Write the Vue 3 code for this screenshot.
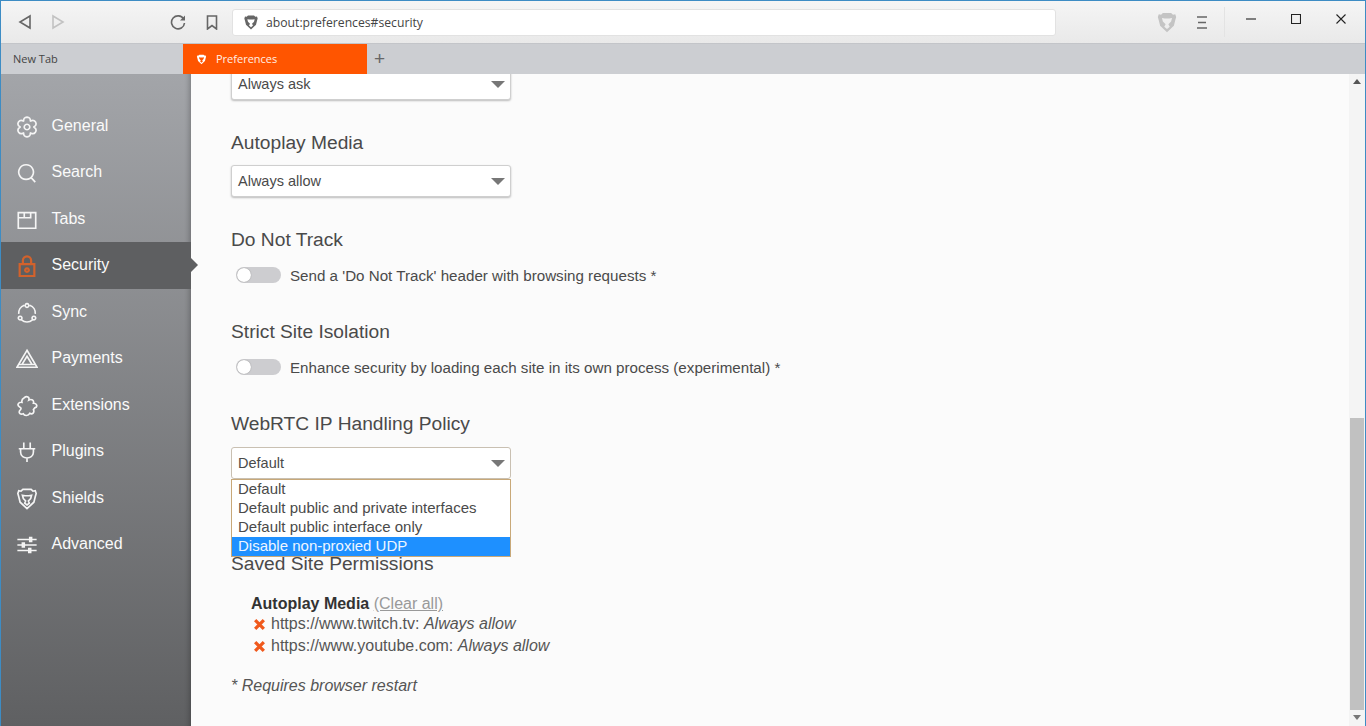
<script setup>
function gear() {
  const cx = 12, cy = 12
  const n = 6
  let d = ''
  for (let i = 0; i < n; i++) {
    const a = (i / n) * Math.PI * 2 - Math.PI / 2
    const p = (r, da) => `${(cx + r * Math.cos(a + da)).toFixed(2)} ${(cy + r * Math.sin(a + da)).toFixed(2)}`
    d += `${i ? 'L' : 'M'}${p(7.6, -0.5)} Q${p(11.2, -0.36)} ${p(10.8, 0)} Q${p(11.2, 0.36)} ${p(7.6, 0.5)} `
  }
  return d + 'Z M12 9 a3 3 0 1 0 .01 0 Z'
}
const shield = 'M7.5 1.5 H16.5 L18.5 3.5 L21 3 L22 6 L21 9.5 L19.5 15.5 L12 22.5 L4.5 15.5 L3 9.5 L2 6 L3 3 L5.5 3.5 Z M6.5 7 L9.5 7.5 H14.5 L17.5 7 L16.5 11 L13.5 14 L15 16.5 L12 19 L9 16.5 L10.5 14 L7.5 11 Z'
const shieldLine = 'M7.5 1.5 H16.5 L18.5 3.5 L21 3 L22 6 L21 9.5 L19.5 15.5 L12 22.5 L4.5 15.5 L3 9.5 L2 6 L3 3 L5.5 3.5 Z M7 8 L10 8.5 H14 L17 8 L16 11.5 L13.5 14 L14.5 16.5 L12 18.5 L9.5 16.5 L10.5 14 L8 11.5 Z'
const items = [
  { name: 'General', d: gear() },
  { name: 'Search', d: 'M11 3 a8 8 0 1 0 .01 0 Z M16.5 17 L21 22' },
  { name: 'Tabs', d: 'M2.5 4 H21.5 V21 H2.5 Z M2.5 9.5 H9 V4 M16 4 V9.5 H9' },
  { name: 'Security', active: true, d: 'M4 10 H20 V23 H4 Z M7.5 10 V6 a4.5 4.5 0 0 1 9 0 V10 M12 14.5 a2 2 0 1 0 .01 0 Z' },
  { name: 'Sync', d: 'M9 3.5 A9 9 0 0 0 3 13 M6 19.5 A9 9 0 0 0 18 19.5 M21 13 A9 9 0 0 0 15 3.5 M12 1.8 a2 2 0 1 0 .01 0 Z M4.5 15.5 a2 2 0 1 0 .01 0 Z M19.5 15.5 a2 2 0 1 0 .01 0 Z' },
  { name: 'Payments', d: 'M12 2.5 L23 21 H1 Z M12 9 L17.5 18 H6.5 Z M3.5 18 H20.5' },
  { name: 'Extensions', d: 'M9 3 C12 .5 15 2.5 14 5.5 C17 4 20 5.5 19 9 C23 9 24 13 20.5 14 L19 16 C20.5 19 18 21.5 15 20 C13.5 23 9 23 8 20.5 C5 21.5 2.5 20 4 17 C6 15 6 14 4 13 C.5 11 2.5 7.5 6.5 8 C6 6 7 4 9 3 Z' },
  { name: 'Plugins', d: 'M8.5 1.5 V8 M15.5 1.5 V8 M3 8.5 H21 M5 8.5 V12 C5 17 9 18.5 12 18.5 C15 18.5 19 17 19 12 V8.5 M12 18.5 V23' },
  { name: 'Shields', d: shieldLine },
  { name: 'Advanced', d: 'M1.5 6 H22.5 M1.5 12 H22.5 M1.5 18 H22.5 M15 4 H17 V8 H15 Z M7 10 H9 V14 H7 Z M14 16 H16 V20 H14 Z' }
]
const options = ['Default', 'Default public and private interfaces', 'Default public interface only', 'Disable non-proxied UDP']
const sites = ['https://www.twitch.tv:', 'https://www.youtube.com:']
</script>

<template>
  <div class="window">
    <header class="toolbar">
      <svg class="tb nav-back" viewBox="0 0 14 16"><path d="M12 2 L2 8 L12 14 Z" /></svg>
      <svg class="tb nav-fwd" viewBox="0 0 14 16"><path d="M2 2 L12 8 L2 14 Z" /></svg>
      <svg class="tb reload" viewBox="0 0 16 16"><path d="M13.6 5 A6.5 6.5 0 1 0 14.5 9" /><path class="fill" d="M15 1.5 V6.5 H10 Z" /></svg>
      <svg class="tb bookmark" viewBox="0 0 12 15"><path d="M1.5 1 H10.5 V14 L6 10.5 L1.5 14 Z" /></svg>
      <div class="url">
        <svg class="url-shield" viewBox="0 0 24 24"><path fill-rule="evenodd" :d="shield" /></svg>
        <span>about:preferences#security</span>
      </div>
      <svg class="brave" viewBox="0 0 24 24"><path fill-rule="evenodd" :d="shield" /></svg>
      <svg class="menu" viewBox="0 0 12 13"><path d="M1 1 H11 M2 6.5 H10 M1 12 H11" /></svg>
      <i class="sep"></i>
      <svg class="win min" viewBox="0 0 10 10"><path d="M0 5 H10" /></svg>
      <svg class="win max" viewBox="0 0 10 10"><path d="M.5 .5 H9.5 V9.5 H.5 Z" /></svg>
      <svg class="win close" viewBox="0 0 10 10"><path d="M.5 .5 L9.5 9.5 M9.5 .5 L.5 9.5" /></svg>
    </header>

    <nav class="tabs">
      <div class="tab">New Tab</div>
      <div class="tab current">
        <svg class="tab-shield" viewBox="0 0 24 24"><path fill-rule="evenodd" :d="shield" /></svg>
        Preferences
      </div>
      <div class="plus">+</div>
    </nav>

    <div class="body">
      <aside class="sidebar">
        <div v-for="item in items" :key="item.name" class="item" :class="{ active: item.active }">
          <svg class="icon" viewBox="0 0 24 24"><path :d="item.d" /></svg>
          <span>{{ item.name }}</span>
        </div>
      </aside>

      <main class="content">
        <div class="select first">Always ask<i class="caret"></i></div>

        <section class="sec s2">
          <h2>Autoplay Media</h2>
          <div class="select">Always allow<i class="caret"></i></div>
        </section>

        <section class="sec s3">
          <h2>Do Not Track</h2>
          <label class="row"><i class="toggle"></i>Send a 'Do Not Track' header with browsing requests *</label>
        </section>

        <section class="sec s4">
          <h2>Strict Site Isolation</h2>
          <label class="row"><i class="toggle"></i>Enhance security by loading each site in its own process (experimental) *</label>
        </section>

        <section class="sec s5">
          <h2>WebRTC IP Handling Policy</h2>
          <div class="select open">
            Default<i class="caret"></i>
            <ul class="dropdown">
              <li v-for="(o, i) in options" :key="o" :class="{ hl: i === 3 }">{{ o }}</li>
            </ul>
          </div>
        </section>

        <section class="sec s6">
          <h2>Saved Site Permissions</h2>
          <div class="perm">
            <div class="perm-head"><b>Autoplay Media</b> <a>(Clear all)</a></div>
            <div v-for="s in sites" :key="s" class="site">
              <svg class="x" viewBox="0 0 12 12"><path d="M2 2 L10 10 M10 2 L2 10" /></svg>
              <span>{{ s }} <em>Always allow</em></span>
            </div>
          </div>
        </section>

        <p class="note">* Requires browser restart</p>
      </main>

      <div class="scrollbar">
        <i class="arrow up"></i>
        <div class="track"><div class="thumb"></div></div>
        <i class="arrow down"></i>
      </div>
    </div>
  </div>
</template>

<style>
html, body { margin: 0; overflow: hidden; }
</style>

<style scoped>
.window {
  width: 1366px; height: 726px; box-sizing: border-box; overflow: hidden;
  display: flex; flex-direction: column;
  border: solid #3d8cc4; border-width: 1px 1px 0 1px;
  font-family: "Liberation Sans", Arial, sans-serif; color: #4a4a4a;
}
.toolbar {
  height: 42px; flex: none; display: flex; align-items: center;
  background: linear-gradient(#f5f5f5, #e9e9e9);
  border-bottom: 1px solid #c3c5c9;
}
.tb { fill: none; stroke: #666; stroke-width: 1.6; }
.nav-back { width: 14px; height: 16px; margin-left: 17px; }
.nav-fwd { width: 14px; height: 16px; margin-left: 19px; stroke: #c2c2c2; }
.reload { width: 16px; height: 16px; margin-left: 105px; }
.reload .fill { fill: #666; stroke: none; }
.bookmark { width: 12px; height: 15px; margin-left: 20px; }
.url {
  width: 824px; height: 27px; margin-left: 14px; box-sizing: border-box;
  display: flex; align-items: center; background: #fff;
  border: 1px solid #e2e2e2; border-radius: 3px;
  font: 12.2px "Open Sans", sans-serif; color: #444;
}
.url-shield { width: 16px; height: 17px; margin-left: 10px; margin-right: 7px; fill: #666; }
.brave { width: 22px; height: 23px; margin-left: 100px; fill: #c4c4c4; }
.menu { width: 12px; height: 13px; margin-left: 18px; fill: none; stroke: #666; stroke-width: 1.5; }
.sep { width: 1px; height: 30px; margin-left: 16px; background: #e3e3e3; }
.win { width: 10px; height: 10px; fill: none; stroke: #222; stroke-width: 1.1; margin-top: -6px; }
.min { margin-left: 21px; }
.max { margin-left: 35px; }
.close { margin-left: 35px; }

.tabs {
  height: 30px; flex: none; display: flex; align-items: center;
  background: #ccced2; border-bottom: 0;
  font: 11px "Open Sans", sans-serif; color: #444;
}
.tab { width: 170px; padding-left: 12px; height: 30px; line-height: 30px; box-sizing: border-box; }
.tabs .tab:first-child { width: 182px; }
.tab.current {
  width: 184px; padding-left: 13px; background: #ff5500; color: #fff0e6;
  display: flex; align-items: center;
}
.tab-shield { width: 11px; height: 11px; margin-right: 9px; fill: #fff; }
.plus { margin-left: 7px; font: 300 19px "Liberation Sans", sans-serif; color: #666; }

.body { flex: 1; display: flex; min-height: 0; background: #fbfbfb; }
.sidebar {
  width: 190px; flex: none; padding-top: 28.8px; box-sizing: border-box;
  background: linear-gradient(#a3a5a9, #5f6062);
  box-shadow: inset -6px 0 5px -4px rgba(0,0,0,.22);
  position: relative;
}
.item {
  height: 46.44px; display: flex; align-items: center;
  color: #fafafa; font-size: 16px; padding-left: 15px; position: relative;
  box-sizing: border-box;
}
.item span { margin-left: 13.5px; }
.icon { width: 22px; height: 22px; fill: none; stroke: #f5f5f5; stroke-width: 1.8; flex: none; margin-top: 2px; }
.item.active { background: #5e5f61; }
.item.active .icon { stroke: #d2622c; stroke-width: 2.4; }
.item.active::after {
  content: ""; position: absolute; right: -7px; top: 50%; margin-top: -7px;
  border-left: 7px solid #5e5f61; border-top: 7px solid transparent; border-bottom: 7px solid transparent;
}

.content { flex: 1; padding-left: 40px; min-width: 0; overflow: hidden; font-size: 15.17px; }
h2 { margin: 0; font-weight: 400; font-size: 19.2px; line-height: 24px; color: #4a4a4a; }
.select {
  width: 280px; height: 32px; box-sizing: border-box; position: relative;
  background: #fff; border: 1px solid #cfcfcf; border-radius: 3px;
  box-shadow: 0 1px 2px rgba(0,0,0,.25);
  padding-left: 6px; line-height: 30px; font-size: 14.5px; color: #4a4a4a;
  margin-top: 11px;
}
.select.first { margin-top: -6px; }
.select.open { box-shadow: none; border-color: #c9c0b2; }
.caret {
  position: absolute; right: 5px; top: 12px;
  border-top: 7px solid #777; border-left: 7px solid transparent; border-right: 7px solid transparent;
}
.s2 { margin-top: 31px; }
.s2 .select { margin-top: 10px; }
.s3 { margin-top: 31px; }
.s4 { margin-top: 33px; }
.s5 { margin-top: 33px; }
.s6 { margin-top: 73px; }
.row { display: flex; align-items: center; height: 24px; margin-top: 11px; padding-left: 5px; }
.toggle {
  width: 45px; height: 16px; margin-right: 9px; border-radius: 8px; background: #cdcdd0;
  position: relative; flex: none;
}
.toggle::before {
  content: ""; position: absolute; left: 1px; top: 1px; width: 14px; height: 14px;
  border-radius: 50%; background: #fff; box-shadow: 0 0 1px #777;
}
.dropdown {
  position: absolute; left: -1px; top: 31px; width: 280px; box-sizing: border-box; margin: 0; padding: 0;
  list-style: none; background: #fff; border: 1px solid #c8a878; z-index: 2;
}
.dropdown li { height: 19px; line-height: 18px; padding-left: 6px; font-size: 15px; color: #4a4a4a; }
.dropdown li.hl { background: #1e90ff; color: #eef6ff; }
.perm { margin: 17px 0 0 20px; font-size: 16px; }
.perm-head { height: 20px; line-height: 22px; }
.perm-head b { color: #333; }
.perm-head a { color: #999; text-decoration: underline; }
.site { display: flex; align-items: center; height: 22px; color: #555; }
.x { width: 13px; height: 13px; margin-left: 2px; margin-right: 5px; fill: none; stroke: #f0591c; stroke-width: 3; margin-top: 1px; }
.site em { color: #555; }
.note { margin: 17px 0 0; font-style: italic; font-size: 16px; line-height: 24px; color: #555; }

.scrollbar { width: 16px; flex: none; background: #f4f4f4; display: flex; flex-direction: column; position: relative; margin-right: 0; }
.track { flex: 1; position: relative; }
.thumb { position: absolute; left: 1px; right: 1px; top: 328px; bottom: 0; background: #c1c1c1; }
.arrow { display: block; height: 16px; flex: none; position: relative; }
.arrow::after {
  content: ""; position: absolute; left: 4px; top: 5px;
  border-left: 4px solid transparent; border-right: 4px solid transparent;
}
.up::after { border-bottom: 5px solid #555; }
.down::after { border-top: 5px solid #777; }
</style>
